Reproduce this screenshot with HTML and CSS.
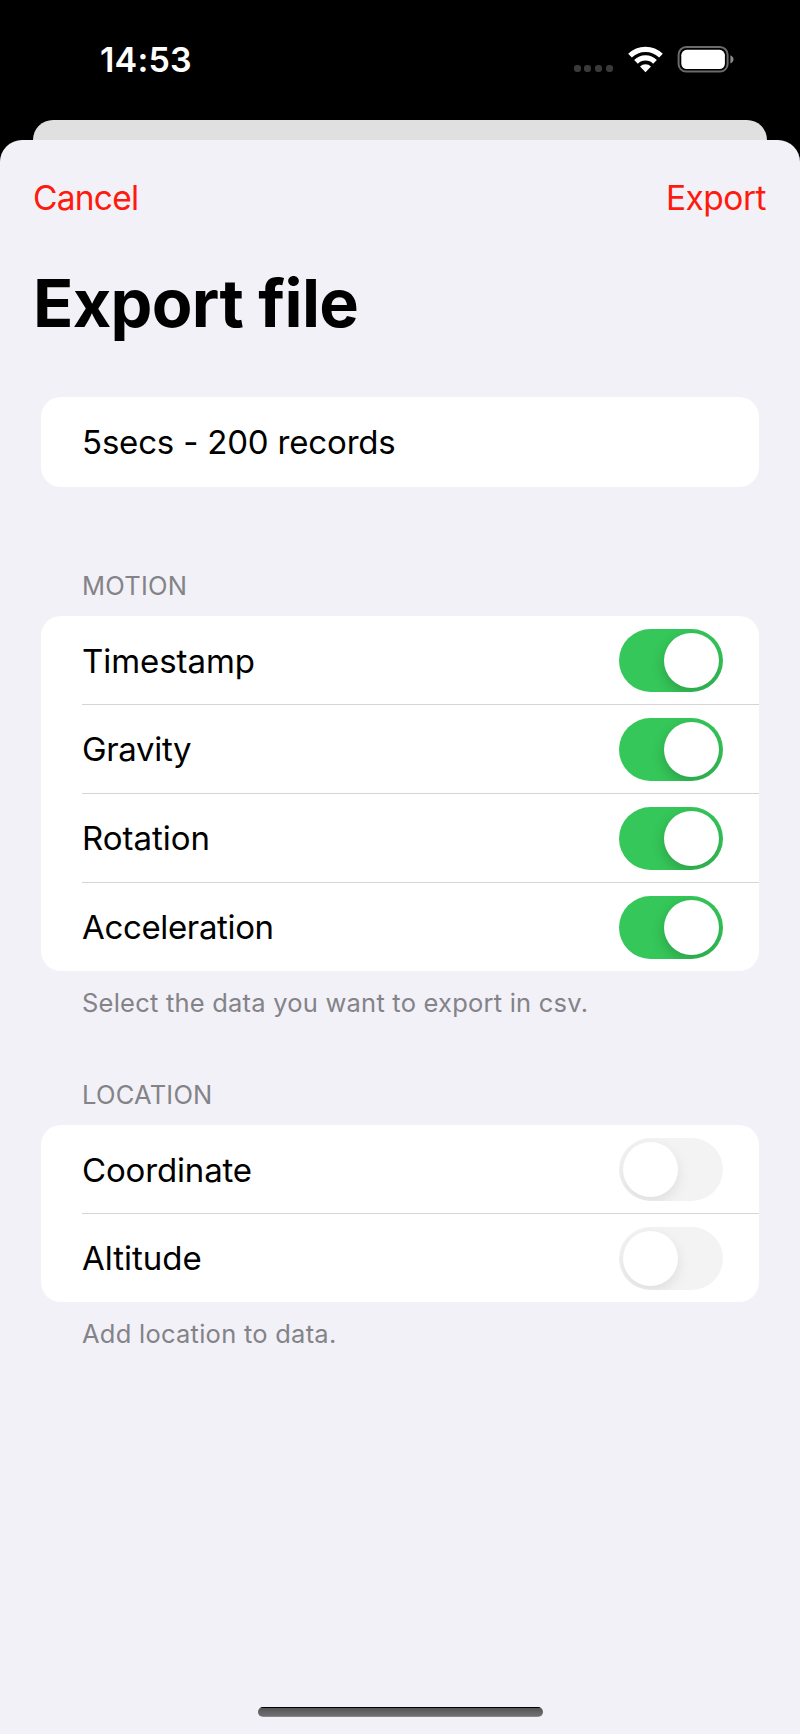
FILE: index.html
```html
<!DOCTYPE html>
<html lang="en">
<head>
<meta charset="utf-8">
<title>Export file</title>
<link rel="stylesheet" href="styles.css">
</head>
<body>
<div class="phone">
  <header class="status">
    <span class="time">14:53</span>
    <div class="indicators">
      <div class="dots"><i></i><i></i><i></i><i></i></div>
      <svg class="wifi" width="37" height="28" viewBox="0 0 37 28">
        <g fill="none" stroke="#fff" stroke-width="5.2">
          <path d="M3 10.700A22 22 0 0 1 34 10.700"/>
          <path d="M9 16.800A13.400 13.400 0 0 1 28 16.800"/>
        </g>
        <path d="M13 21.500a7.800 7.800 0 0 1 11 0L18.500 27.200z" fill="#fff"/>
      </svg>
      <svg class="battery" width="57" height="28" viewBox="0 0 57 28">
        <rect x="1.6" y="2" width="49" height="24.600" rx="7.600" fill="none" stroke="#6b6b6b" stroke-width="2"/>
        <rect x="4.300" y="4.800" width="43.600" height="19.200" rx="5.400" fill="#fff"/>
        <path d="M53.400 10.200c2 .8 3.100 2.300 3.100 4.100s-1.100 3.300-3.100 4.100z" fill="#8a8a8a"/>
      </svg>
    </div>
  </header>
  <div class="behind"></div>
  <main class="sheet">
    <nav class="nav"><a class="cancel">Cancel</a><a class="export">Export</a></nav>
    <h1 class="title">Export file</h1>
    <section class="card name-card"><div class="row"><span class="label l-name">5secs - 200 records</span></div></section>
    <h2 class="heading h-motion">MOTION</h2>
    <section class="card">
      <div class="row"><span class="label l-time">Timestamp</span><span class="switch on"></span></div>
      <div class="row"><span class="label l-grav">Gravity</span><span class="switch on"></span></div>
      <div class="row"><span class="label l-rot">Rotation</span><span class="switch on"></span></div>
      <div class="row"><span class="label l-acc">Acceleration</span><span class="switch on"></span></div>
    </section>
    <p class="note n-select">Select the data you want to export in csv.</p>
    <h2 class="heading h-location">LOCATION</h2>
    <section class="card">
      <div class="row"><span class="label l-coord">Coordinate</span><span class="switch"></span></div>
      <div class="row"><span class="label l-alt">Altitude</span><span class="switch"></span></div>
    </section>
    <p class="note n-add">Add location to data.</p>
    <div class="home"></div>
  </main>
</div>
</body>
</html>
```
FILE: styles.css
```css
* { box-sizing: border-box; }
body { margin: 0; background: #000; font-family: Inter, "Liberation Sans", sans-serif; color: #000; }
.phone { width: 800px; height: 1734px; display: flex; flex-direction: column; background: #000; overflow: hidden; }
.status { height: 120px; display: flex; justify-content: space-between; padding: 0 66px 0 100px; }
.time { margin-top: 39px; height: 42px; line-height: 42px; color: #fff; font-size: 34px; font-weight: 600; letter-spacing: .2px; white-space: nowrap; }
.indicators { display: flex; align-items: flex-start; padding-top: 45px; }
.dots { display: flex; gap: 3.8px; margin: 20px 14px 0 0; }
.dots i { width: 7px; height: 7px; border-radius: 3px; background: #3a3a3a; }
.wifi { margin-right: 13px; }
.battery { display: block; }
.behind { height: 20px; margin: 0 33px; background: #e0e0e0; border-radius: 20px 20px 0 0; flex: none; }
.sheet { flex: 1; display: flex; flex-direction: column; background: #f2f1f7; border-radius: 22px 22px 0 0; }
.nav { height: 115px; display: flex; justify-content: space-between; padding: 37px 34px 0 33px; font-size: 33.500px; line-height: 42px; color: #ff1a0e; }
.cancel { letter-spacing: -.75px; }
.export { letter-spacing: -.5px; }
.title { margin: 8px 0 0 33px; height: 80px; line-height: 80px; font-size: 66.500px; font-weight: 700; letter-spacing: -.7px; white-space: nowrap; }
.card { margin: 0 41px; background: #fff; border-radius: 20px; flex: none; }
.row { height: 88px; margin-left: 41px; padding-right: 36px; display: flex; align-items: center; justify-content: space-between; }
.row + .row { height: 89px; border-top: 1px solid #d4d4d6; }
.name-card { margin-top: 54px; }
.name-card .row { height: 90px; }
.label { padding-top: 1px; font-size: 33px; line-height: 42px; white-space: nowrap; }
.l-name, .row + .row .label { padding-top: 0; }
.l-name { letter-spacing: -.18px; }
.l-time { letter-spacing: -.06px; }
.l-grav, .l-acc { letter-spacing: -.35px; }
.l-coord { letter-spacing: -.16px; }
.heading, .note { margin: 0 82px; height: 32px; line-height: 32px; font-size: 25.500px; font-weight: 400; letter-spacing: .22px; color: #838388; white-space: nowrap; }
.heading { margin-bottom: 14px; }
.h-motion { margin-top: 83px; }
.note { margin-top: 16px; }
.n-add { letter-spacing: .25px; }
.h-location { margin-top: 60px; }
.switch { width: 104px; height: 63px; padding: 4px; border-radius: 32px; background: #f3f3f3; display: flex; overflow: hidden; }
.switch::before { content: ""; width: 55px; height: 55px; border-radius: 50%; background: #fff; box-shadow: 0 5px 14px rgba(0,0,0,.09); }
.switch.on { background: #35c759; justify-content: flex-end; }
.switch.on::before { box-shadow: 0 5px 14px rgba(0,0,0,.2); }
.home { width: 285px; height: 10px; margin: auto auto 17px 258px; border-radius: 5px; background: linear-gradient(#000 0 1px, #555 1px, #707074 9px, #a0a0a4 10px); }
```
